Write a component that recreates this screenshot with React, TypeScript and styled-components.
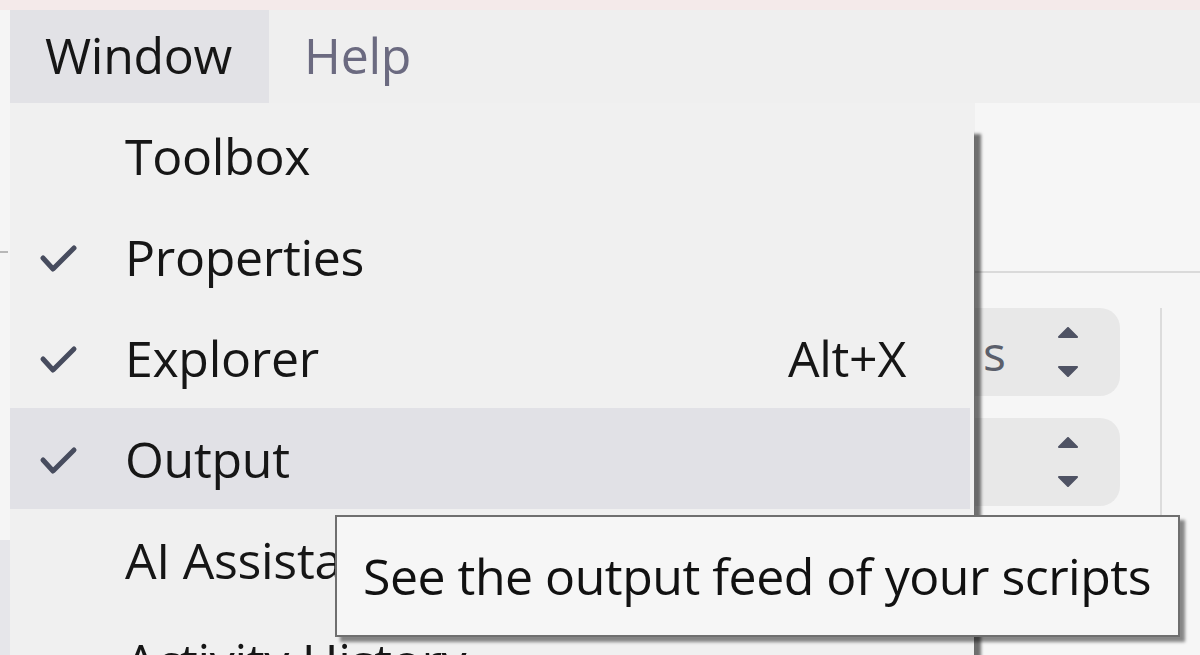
import React from "react";
import styled, { createGlobalStyle } from "styled-components";

const GlobalStyle = createGlobalStyle`
  html, body { margin: 0; padding: 0; background: #efefef; }
  body { font-family: "Open Sans", "Noto Sans", sans-serif; }
`;

const Page = styled.div`
  position: relative;
  width: 1200px;
  height: 655px;
  overflow: hidden;
  display: grid;
  grid-template-rows: 10px 93px 1fr;
  background: #efefef;
  font-family: "Open Sans", "Noto Sans", sans-serif;
`;

const TopStrip = styled.div`
  background: #f4eaea;
`;

const MenuBar = styled.div`
  display: flex;
  align-items: stretch;
  background: #efefef;
`;

const BarEdge = styled.div`
  width: 10px;
  background: #f5f5f5;
`;

const MenuTitle = styled.div<{ $active?: boolean }>`
  display: flex;
  align-items: center;
  padding: 0 37px 3px 35px;
  font-size: 50px;
  letter-spacing: -0.3px;
  color: ${(p) => (p.$active ? "#161616" : "#6b6a80")};
  background: ${(p) => (p.$active ? "#e2e2e6" : "transparent")};
`;

const Body = styled.div`
  display: flex;
`;

const LeftStrip = styled.div`
  width: 10px;
  display: grid;
  grid-template-rows: 437px 1fr;
`;

const LeftUpper = styled.div`
  background: #f5f5f5;
  position: relative;
`;

const LeftLower = styled.div`
  background: #e6e6ea;
`;

const Dash = styled.div`
  position: absolute;
  left: 0;
  top: 148px;
  width: 8px;
  height: 2px;
  background: #b8b8b8;
`;

const Workspace = styled.div`
  flex: 1;
  background: #f0f0f0;
`;

const RightPanel = styled.div`
  width: 225px;
  background: #f6f6f6;
  display: flex;
  flex-direction: column;
`;

const PanelHead = styled.div`
  height: 168px;
  border-bottom: 2px solid #dadada;
`;

const PanelBody = styled.div`
  display: flex;
  padding-top: 35px;
`;

const FieldCol = styled.div`
  width: 145px;
  display: flex;
  flex-direction: column;
  gap: 22px;
`;

const Select = styled.div`
  height: 88px;
  background: #e8e8e8;
  border-radius: 0 20px 20px 0;
  display: flex;
  align-items: center;
  justify-content: space-between;
  padding: 0 40px 0 8px;
  font-size: 48px;
  color: #5b5f6b;
`;

const VLine = styled.div`
  margin-left: 40px;
  width: 2px;
  height: 260px;
  background: #dcdcdc;
`;

const Dropdown = styled.div`
  position: absolute;
  left: 10px;
  top: 103px;
  width: 964px;
  padding-top: 2px;
  background: #f0f0f0;
  box-shadow: 8px 30px 3px -1px rgba(0, 0, 0, 0.55);
`;

const Item = styled.div<{ $hover?: boolean }>`
  height: 101px;
  margin-right: 4px;
  display: grid;
  grid-template-columns: 115px 1fr auto;
  align-items: center;
  padding-right: 64px;
  font-size: 50px;
  letter-spacing: -0.3px;
  color: #161616;
  background: ${(p) => (p.$hover ? "#e1e1e6" : "transparent")};
`;

const CheckCell = styled.div`
  display: flex;
  align-items: center;
  padding-left: 29px;
  padding-top: 4px;
`;

const Label = styled.span`
  white-space: nowrap;
`;

const Shortcut = styled.span`
  white-space: nowrap;
`;

const Tooltip = styled.div`
  position: absolute;
  left: 335px;
  top: 515px;
  width: 845px;
  height: 122px;
  box-sizing: border-box;
  border: 2px solid #6f6f6f;
  background: #f6f6f6;
  box-shadow: 5px 5px 3px rgba(0, 0, 0, 0.45);
  display: flex;
  align-items: center;
  padding-left: 26px;
  font-size: 50px;
  letter-spacing: -0.5px;
  color: #111;
  white-space: nowrap;
`;

const Check = () => (
  <svg width="40" height="34" viewBox="0 0 40 34">
    <path
      d="M4 16 L14 27 L35 6"
      fill="none"
      stroke="#474c5e"
      strokeWidth="5"
      strokeLinecap="round"
      strokeLinejoin="round"
    />
  </svg>
);

const Spinner = () => (
  <svg width="24" height="50" viewBox="0 0 24 50">
    <path d="M3 10 L12 1 L21 10 Z" fill="#4f5364" stroke="#4f5364" strokeWidth="2" strokeLinejoin="round" />
    <path d="M3 40 L12 49 L21 40 Z" fill="#4f5364" stroke="#4f5364" strokeWidth="2" strokeLinejoin="round" />
  </svg>
);

const items = [
  { label: "Toolbox", checked: false },
  { label: "Properties", checked: true },
  { label: "Explorer", checked: true, shortcut: "Alt+X" },
  { label: "Output", checked: true, hover: true },
  { label: "AI Assistant", checked: false },
  { label: "Activity History", checked: false },
];

export default function App() {
  return (
    <>
      <GlobalStyle />
      <Page>
        <TopStrip />
        <MenuBar>
          <BarEdge />
          <MenuTitle $active>Window</MenuTitle>
          <MenuTitle>Help</MenuTitle>
        </MenuBar>
        <Body>
          <LeftStrip>
            <LeftUpper>
              <Dash />
            </LeftUpper>
            <LeftLower />
          </LeftStrip>
          <Workspace />
          <RightPanel>
            <PanelHead />
            <PanelBody>
              <FieldCol>
                <Select>
                  <span>s</span>
                  <Spinner />
                </Select>
                <Select>
                  <span />
                  <Spinner />
                </Select>
              </FieldCol>
              <VLine />
            </PanelBody>
          </RightPanel>
        </Body>
        <Dropdown>
          {items.map((it) => (
            <Item key={it.label} $hover={it.hover}>
              <CheckCell>{it.checked ? <Check /> : null}</CheckCell>
              <Label>{it.label}</Label>
              <Shortcut>{it.shortcut ?? ""}</Shortcut>
            </Item>
          ))}
        </Dropdown>
        <Tooltip>See the output feed of your scripts</Tooltip>
      </Page>
    </>
  );
}
